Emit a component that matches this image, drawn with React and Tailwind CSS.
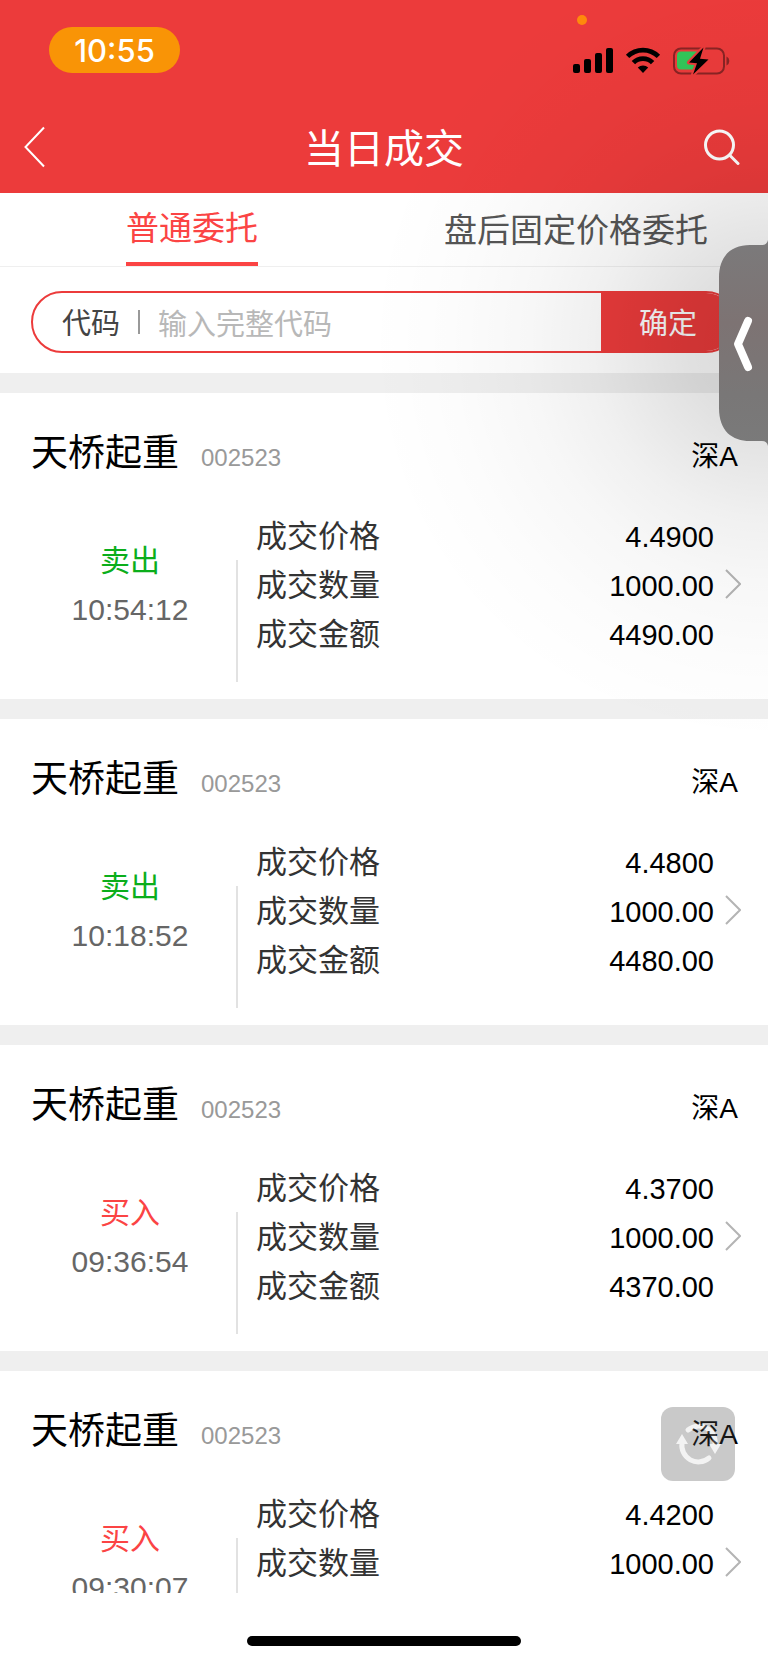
import React, { useState } from 'react';

const TABS = ['普通委托', '盘后固定价格委托'];

const TRADES = [
  { id: 1, name: '天桥起重', code: '002523', market: '深A', side: '卖出', time: '10:54:12', price: '4.4900', volume: '1000.00', amount: '4490.00' },
  { id: 2, name: '天桥起重', code: '002523', market: '深A', side: '卖出', time: '10:18:52', price: '4.4800', volume: '1000.00', amount: '4480.00' },
  { id: 3, name: '天桥起重', code: '002523', market: '深A', side: '买入', time: '09:36:54', price: '4.3700', volume: '1000.00', amount: '4370.00' },
  { id: 4, name: '天桥起重', code: '002523', market: '深A', side: '买入', time: '09:30:07', price: '4.4200', volume: '1000.00', amount: '4420.00' },
];

function StatusBar() {
  return (
    <div className="flex items-start justify-between h-24 pt-[27px] pl-[49px] pr-[38px]">
      <span className="w-[131px] h-[46px] rounded-full bg-[#f99406] text-white text-center text-[31px] leading-[48px] font-medium font-['Inter',sans-serif]">
        10:55
      </span>
      <div className="relative flex items-start gap-3 pt-5">
        <span className="absolute -top-3 left-1 size-[10px] rounded-full bg-[#ff8a0c]" />
        <svg width="40" height="27" viewBox="0 0 40 27" aria-hidden="true">
          <rect x="0" y="17" width="7" height="9" rx="2" />
          <rect x="11" y="12" width="7" height="14" rx="2" />
          <rect x="22" y="6" width="7" height="20" rx="2" />
          <rect x="33" y="1" width="7" height="25" rx="2" />
        </svg>
        <svg width="36" height="27" viewBox="0 0 36 27" fill="none" stroke="#000" strokeWidth="4.8" aria-hidden="true">
          <path d="M2.600 9.400a22 22 0 0 1 30.800 0" />
          <path d="M8.400 15.600a13.600 13.600 0 0 1 19.200 0" />
          <path d="M12.800 20.600a7.500 7.500 0 0 1 10.400 0L18 26Z" fill="#000" stroke="none" />
        </svg>
        <svg width="57" height="29" viewBox="0 0 57 29" aria-hidden="true">
          <rect x="1" y="1.500" width="50" height="25" rx="7" fill="none" stroke="#8a2424" strokeWidth="2" />
          <path d="M53.500 9.500a5 5 0 0 1 0 9Z" fill="#8a2424" />
          <path d="M8 4.500h16v18H8a4 4 0 0 1-4-4v-10a4 4 0 0 1 4-4Z" fill="#34c759" />
          <path
            d="M30.500 .5 16 15.500l8 .8L20 27.500 35.500 12.500l-8.500-.8Z"
            stroke="#ec3b3b"
            strokeWidth="4"
            strokeLinejoin="round"
            paintOrder="stroke"
          />
        </svg>
      </div>
    </div>
  );
}

function Header() {
  return (
    <header className="shrink-0 bg-[#ec3b3b] font-['Noto_Sans_CJK_SC',sans-serif]">
      <StatusBar />
      <div className="flex items-center h-[97px] pl-6 pr-7 pt-1 text-white">
        <button type="button" aria-label="返回" className="w-10 h-12 flex items-center">
          <svg width="22" height="42" viewBox="0 0 22 42" fill="none" stroke="currentColor" strokeWidth="2">
            <path d="M20 1.500 1.500 21 20 40.500" />
          </svg>
        </button>
        <h1 className="flex-1 text-center text-[40px] leading-[58px] pb-[2px]">当日成交</h1>
        <button type="button" aria-label="搜索" className="w-9 h-12 flex items-center">
          <svg width="36" height="36" viewBox="0 0 36 36" fill="none" stroke="currentColor" strokeWidth="3" strokeLinecap="round">
            <circle cx="15.500" cy="16" r="14" />
            <path d="M25.500 26 34 34.500" />
          </svg>
        </button>
      </div>
    </header>
  );
}

function Tabs({ active, onChange }) {
  return (
    <nav className="shrink-0 grid grid-cols-2 h-[74px] border-b border-[#efefef] font-['Noto_Sans_CJK_SC',sans-serif]">
      {TABS.map((tab, index) => (
        <button
          key={tab}
          type="button"
          onClick={() => onChange(index)}
          className={
            index === active
              ? 'justify-self-center border-b-4 border-[#fb4444] text-[33px] leading-[64px] pb-1 text-[#fb4444]'
              : 'justify-self-center text-[33px] leading-[64px] pb-1 text-[#555]'
          }
        >
          {tab}
        </button>
      ))}
    </nav>
  );
}

function SearchForm() {
  const [code, setCode] = useState('');

  return (
    <form
      onSubmit={e => e.preventDefault()}
      className="shrink-0 pt-6 pb-5 px-[31px] border-b-[20px] border-[#efefef] font-['Noto_Sans_CJK_SC',sans-serif]"
    >
      <div className="flex items-center h-[62px] rounded-full border-2 border-[#ec3b3b] overflow-hidden text-[29px]">
        <label htmlFor="code" className="pl-[29px] text-[#444]">代码</label>
        <span className="w-[2px] h-6 mx-[18px] bg-[#999]" />
        <input
          id="code"
          value={code}
          onChange={e => setCode(e.target.value)}
          placeholder="输入完整代码"
          className="flex-1 min-w-0 h-full outline-none text-[#444] placeholder:text-[#b8b8b8]"
        />
        <button type="submit" className="w-[134px] h-full bg-[#ec3b3b] text-white">确定</button>
      </div>
    </form>
  );
}

function TradeCard({ trade }) {
  const rows = [
    ['成交价格', trade.price],
    ['成交数量', trade.volume],
    ['成交金额', trade.amount],
  ];

  return (
    <article className="pt-[37px] pb-[17px] border-b-[20px] border-[#efefef]">
      <div className="flex items-baseline h-12 pl-[31px] pr-[30px] leading-[48px]">
        <h2 className="text-[37px]">{trade.name}</h2>
        <span className="ml-[22px] text-[24px] text-[#999]">{trade.code}</span>
        <span className="ml-auto text-[28px]">{trade.market}</span>
      </div>
      <div className="flex mt-[34px] pr-[27px] leading-[49px]">
        <div className="w-[236px] pt-6 pl-6 text-center text-[30px]">
          <p className={trade.side === '卖出' ? 'text-[#0bae1b]' : 'text-[#fb4444]'}>{trade.side}</p>
          <p className="text-[#666]">{trade.time}</p>
        </div>
        <div className="w-[2px] mt-12 bg-[#e2e2e2]" />
        <dl className="flex-1 pl-[18px] pb-[23px]">
          {rows.map(([label, value]) => (
            <div key={label} className="flex items-baseline justify-between h-[49px]">
              <dt className="text-[31px] text-[#333]">{label}</dt>
              <dd className="text-[29px]">{value}</dd>
            </div>
          ))}
        </dl>
        <a href="#detail" aria-label="查看详情" className="flex items-center h-[143px] ml-[11px]">
          <svg width="16" height="30" viewBox="0 0 16 30" fill="none" stroke="#b4b4b4" strokeWidth="2">
            <path d="M1 1 15 15 1 29" />
          </svg>
        </a>
      </div>
    </article>
  );
}

// drawer tab stuck to the right edge of the screen
function EdgeHandle() {
  return (
    <button type="button" aria-label="展开" className="absolute right-0 top-[240px]">
      <svg width="49" height="206" viewBox="0 0 49 206">
        <defs>
          <linearGradient id="handle" x1="0" y1="0" x2="0" y2="1">
            <stop offset="0" stopColor="#7b7a7b" />
            <stop offset="0.4" stopColor="#7d7373" />
            <stop offset="0.75" stopColor="#797777" />
            <stop offset="1" stopColor="#7a7a7a" />
          </linearGradient>
        </defs>
        <path
          d="M49 0q-1 5-6 5H31C13 5 0 15 0 38v130c0 23 13 33 31 33h12q5 0 6 5Z"
          fill="url(#handle)"
        />
        <path d="M29 81 19 104l10 23" fill="none" stroke="#fff" strokeWidth="8" strokeLinecap="round" strokeLinejoin="round" />
      </svg>
    </button>
  );
}

function RefreshButton() {
  return (
    <button
      type="button"
      aria-label="刷新"
      className="absolute right-[33px] bottom-[182px] size-[74px] rounded-xl bg-[#4e4e4e] opacity-30"
    >
      <svg width="74" height="74" viewBox="0 0 74 74" fill="none" stroke="#d9d9d9" strokeWidth="5" strokeLinecap="round">
        <path d="M21 36a16.500 16.500 0 0 0 27 15" />
        <path d="M54 38a16.500 16.500 0 0 0-27-15" />
        <path d="M21 27l6 10H15Z" fill="#d9d9d9" stroke="none" />
        <path d="M54 47l-6-10h12Z" fill="#d9d9d9" stroke="none" />
      </svg>
    </button>
  );
}

function App() {
  const [activeTab, setActiveTab] = useState(0);

  return (
    <div className="relative flex flex-col h-screen overflow-hidden bg-white text-black font-['Liberation_Sans','Noto_Sans_CJK_SC',sans-serif]">
      <Header />
      <Tabs active={activeTab} onChange={setActiveTab} />
      <SearchForm />
      <main className="flex-1 min-h-0 overflow-y-auto [scrollbar-width:none]">
        {TRADES.map(trade => (
          <TradeCard key={trade.id} trade={trade} />
        ))}
      </main>
      <footer className="shrink-0 flex justify-center items-end h-[70px] pb-[17px]">
        <span className="w-[274px] h-[10px] rounded-full bg-black" />
      </footer>

      <div className="absolute inset-0 pointer-events-none bg-[radial-gradient(400px_circle_at_100%_343px,rgba(0,0,0,0.15),rgba(0,0,0,0.12)_20%,rgba(0,0,0,0.06)_44%,rgba(0,0,0,0.03)_60%,rgba(0,0,0,0.01)_80%,transparent)]" />
      <EdgeHandle />
      <RefreshButton />
    </div>
  );
}

export default App;
